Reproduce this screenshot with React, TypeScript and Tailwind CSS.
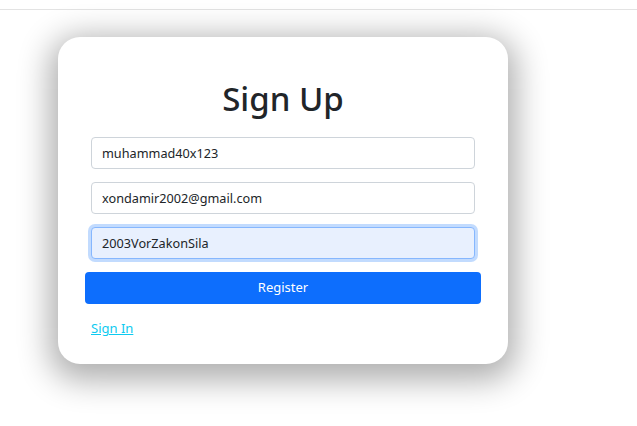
import { useState } from 'react';

function App() {
  const [username, setUsername] = useState('muhammad40x123');
  const [email, setEmail] = useState('xondamir2002@gmail.com');
  const [password, setPassword] = useState('2003VorZakonSila');

  return (
    <div className="min-h-[426px] w-full bg-white font-['Noto_Sans',sans-serif] text-[#212529]">
      {/* top bar */}
      <div className="h-[10px] border-b border-[#e3e3e3] bg-white"></div>

      <div className="pl-[58px] pt-[27px]">
        <div className="w-[450px] h-[327px] rounded-[22px] bg-white shadow-[0_8px_32px_8px_rgba(0,0,0,0.32)] px-[27px] pt-[41px]">
          <h1 className="text-center text-[33px] leading-[41px] font-medium mb-[18px]">Sign Up</h1>

          <form className="flex flex-col gap-[13px]" onSubmit={(e) => e.preventDefault()}>
            <input
              value={username}
              onChange={(e) => setUsername(e.target.value)}
              className="mx-[6px] h-[32px] rounded-[4px] border border-[#ced4da] bg-white px-[10px] text-[12.7px] text-[#212529] outline-none"
            />
            <input
              value={email}
              onChange={(e) => setEmail(e.target.value)}
              className="mx-[6px] h-[32px] rounded-[4px] border border-[#ced4da] bg-white px-[10px] text-[12.7px] text-[#212529] outline-none"
            />
            <input
              value={password}
              onChange={(e) => setPassword(e.target.value)}
              className="mx-[6px] h-[32px] rounded-[4px] border border-[#86b7fe] bg-[#e8f0fe] px-[10px] text-[12.7px] text-[#212529] outline-none shadow-[0_0_0_3px_rgba(13,110,253,0.25)]"
            />
            <button
              type="submit"
              className="h-[32px] rounded-[4px] bg-[#0d6efd] text-[13px] text-white"
            >
              Register
            </button>
          </form>

          <a href="#" className="mt-[15px] ml-[6px] inline-block text-[13px] text-[#0dcaf0] underline">
            Sign In
          </a>
        </div>
      </div>
    </div>
  );
}

export default App;
